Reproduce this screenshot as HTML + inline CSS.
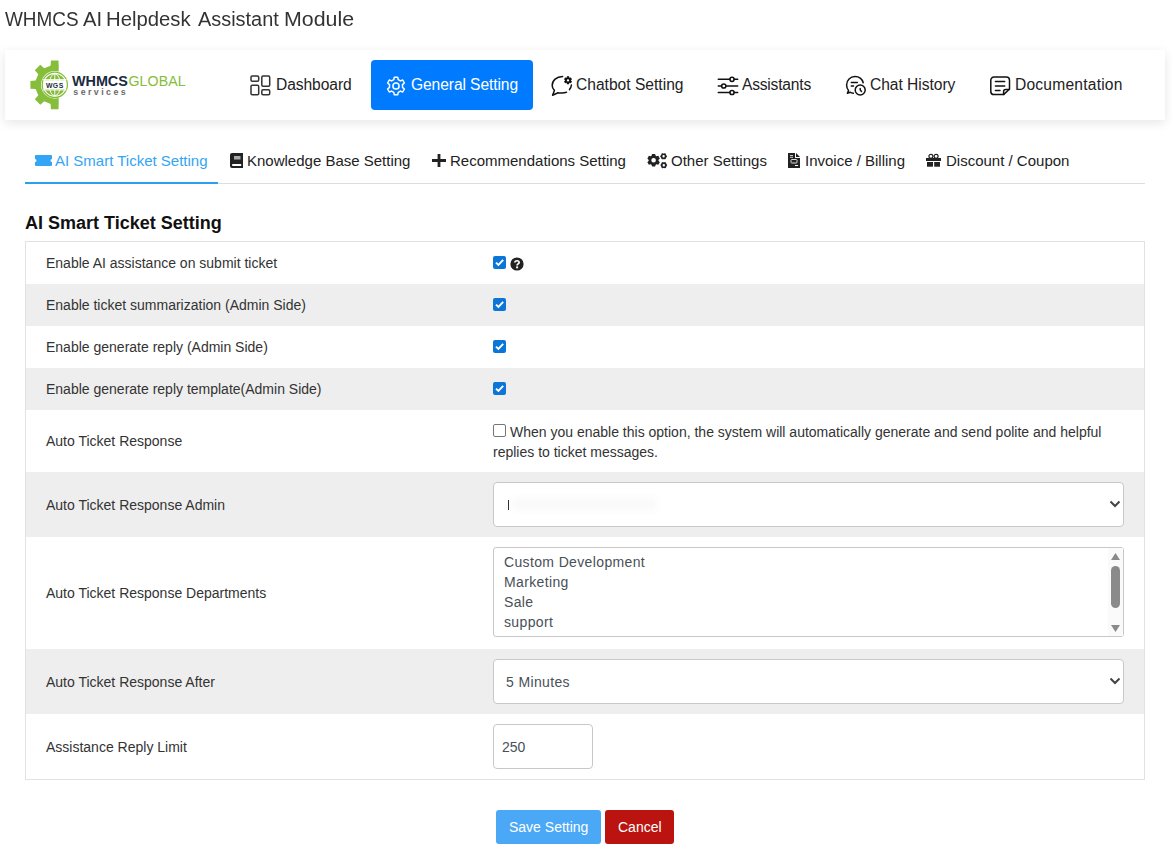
<!DOCTYPE html>
<html><head><meta charset="utf-8">
<style>
*{box-sizing:border-box;margin:0;padding:0}
html,body{width:1173px;height:861px;overflow:hidden;background:#fff}
body{position:relative;font-family:"Liberation Sans",sans-serif;color:#333}
.abs{position:absolute}
.t{position:absolute;white-space:nowrap;line-height:1}
.tw{top:9px;font-size:20px;color:#333;transform-origin:0 0}
#hdr{left:5px;top:50px;width:1160px;height:70px;background:#fff;box-shadow:0 3px 10px rgba(0,0,0,.10)}
.nav{font-size:15.6px;color:#222}
#gs{left:371px;top:60px;width:162px;height:50px;background:#007bff;border-radius:4px}
.tab{font-size:15px;color:#222}
#tabline{left:25px;top:183px;width:1120px;height:1px;background:#ddd}
#tabact{left:25px;top:182px;width:193px;height:2px;background:#2a9ef0}
#h3{left:25px;top:214px;font-size:18px;font-weight:bold;color:#111}
#tbl{left:25px;top:241px;width:1120px;height:539px;border:1px solid #dfe3e7}
.row{position:absolute;left:1px;width:1118px}
.g{background:#eeeeee}
.lbl{font-size:14px;color:#333}
.cb{position:absolute;width:13px;height:13px;border-radius:2px;background:#0b75d8}
.cb svg{position:absolute;left:0;top:0}
.cbu{position:absolute;width:13px;height:13px;border-radius:2px;border:1px solid #767676;background:#fff}
.sel{position:absolute;border:1px solid #c8c8c8;border-radius:4px;background:#fff}
.ff{font-size:14px;color:#495057;letter-spacing:0.36px}
.btn{position:absolute;border-radius:3px}
</style></head>
<body>
<div class="t tw" style="left:5.3px;transform:scaleX(0.946)">WHMCS</div>
<div class="t tw" style="left:83.2px;transform:scaleX(1.010)">AI</div>
<div class="t tw" style="left:106.3px;transform:scaleX(1.015)">Helpdesk</div>
<div class="t tw" style="left:197.6px;transform:scaleX(0.995)">Assistant</div>
<div class="t tw" style="left:283.9px;transform:scaleX(1.068)">Module</div>


<div id="hdr" class="abs"></div>

<!-- logo -->
<svg class="abs" style="left:0;top:0" width="200" height="120" viewBox="0 0 200 120">
  <defs>
    <clipPath id="half"><rect x="0" y="0" width="58.7" height="120"/></clipPath>
  </defs>
  <g clip-path="url(#half)">
    <path fill="#86bd3a" d="M50.60 65.66 L50.90 60.41 L58.70 60.41 L59.00 65.66 L65.37 68.29 L69.29 64.80 L74.80 70.31 L71.31 74.23 L73.94 80.60 L79.19 80.90 L79.19 88.70 L73.94 89.00 L71.31 95.37 L74.80 99.29 L69.29 104.80 L65.37 101.31 L59.00 103.94 L58.70 109.19 L50.90 109.19 L50.60 103.94 L44.23 101.31 L40.31 104.80 L34.80 99.29 L38.29 95.37 L35.66 89.00 L30.41 88.70 L30.41 80.90 L35.66 80.60 L38.29 74.23 L34.80 70.31 L40.31 64.80 L44.23 68.29Z"/>
  </g>
  <circle cx="54.8" cy="84.8" r="13.8" fill="#fff"/>
  <circle cx="54.8" cy="84.8" r="12.6" fill="none" stroke="#86bd3a" stroke-width="1.3"/>
  <circle cx="54.8" cy="84.8" r="10.9" fill="#86bd3a"/>
  <g stroke="#fff" stroke-width="0.9" fill="none">
    <line x1="54.8" y1="73.5" x2="54.8" y2="96"/>
    <ellipse cx="54.8" cy="84.8" rx="5.6" ry="11"/>
    <line x1="43" y1="79.6" x2="66.6" y2="79.6"/>
    <line x1="43" y1="90" x2="66.6" y2="90"/>
  </g>
  <rect x="43.5" y="80.2" width="22.6" height="9.2" fill="#fff"/>
  <text x="54.8" y="87.6" text-anchor="middle" font-family="Liberation Sans" font-weight="bold" font-size="6.9" fill="#1c2b40" letter-spacing="0.45">WGS</text>
  <text x="72" y="85.7" font-family="Liberation Sans" font-weight="bold" font-size="14.4" fill="#1c2b40" letter-spacing="-0.05">WHMCS</text>
  <text x="128.4" y="85.7" font-family="Liberation Sans" font-size="14.2" fill="#86bd3a" letter-spacing="0.1">GLOBAL</text>
  <text x="73.3" y="94.7" font-family="Liberation Sans" font-weight="bold" font-size="8.8" fill="#6a6a6a" letter-spacing="2.45">services</text>
</svg>

<!-- nav -->
<div id="gs" class="abs"></div>
<svg class="abs" style="left:250px;top:75px" width="21" height="21" viewBox="0 0 21 21" fill="none" stroke="#333" stroke-width="1.5">
  <rect x="1" y="1" width="7.7" height="5.2" rx="1.2"/>
  <rect x="1" y="10.2" width="7.7" height="9.5" rx="1.2"/>
  <rect x="11.8" y="1" width="7.9" height="10.3" rx="1.2"/>
  <rect x="11.8" y="14.8" width="7.9" height="4.9" rx="1.2"/>
</svg>
<div class="t nav" style="left:276px;top:76.5px;letter-spacing:-0.07px">Dashboard</div>

<svg class="abs" style="left:386px;top:76px" width="20" height="20" viewBox="0 0 20 20" fill="none" stroke="#fff" stroke-width="1.5" stroke-linejoin="round">
  <path d="M8.3 1.2 L11.7 1.2 L12.2 3.6 L14.4 4.9 L16.7 4 L18.4 7 L16.5 8.6 L16.5 11.4 L18.4 13 L16.7 16 L14.4 15.1 L12.2 16.4 L11.7 18.8 L8.3 18.8 L7.8 16.4 L5.6 15.1 L3.3 16 L1.6 13 L3.5 11.4 L3.5 8.6 L1.6 7 L3.3 4 L5.6 4.9 L7.8 3.6Z"/>
  <circle cx="10" cy="10" r="3.1"/>
</svg>
<div class="t nav" style="left:411px;top:76.5px;color:#fff;letter-spacing:-0.09px">General Setting</div>

<svg class="abs" style="left:548px;top:72px" width="28" height="28" viewBox="0 0 28 28" fill="none" stroke="#111" stroke-width="1.5" stroke-linecap="round" stroke-linejoin="round">
  <path d="M14.6 4.4 C8.5 4.6 4.2 8.6 4.2 13.4 C4.2 15.3 5 17 6.4 18.4 L4.6 23.2 L10 20.7 C11.3 21.1 12.8 21.1 14 21 C15.8 20.9 17.3 20.6 18.5 20.3"/>
  <path d="M23.4 13 C23.2 14.8 22.6 16.3 21.5 17.6"/>
  <path fill="#111" stroke="none" d="M18.65 5.67 L19.00 4.37 L21.00 4.37 L21.35 5.67 L21.65 5.84 L22.94 5.50 L23.94 7.23 L23.00 8.18 L23.00 8.52 L23.94 9.47 L22.94 11.20 L21.65 10.86 L21.35 11.03 L21.00 12.33 L19.00 12.33 L18.65 11.03 L18.35 10.86 L17.06 11.20 L16.06 9.47 L17.00 8.52 L17.00 8.18 L16.06 7.23 L17.06 5.50 L18.35 5.84Z M20.00 7.15 A1.20 1.20 0 1 0 20.00 9.55 A1.20 1.20 0 1 0 20.00 7.15 Z" fill-rule="evenodd"/>
</svg>
<div class="t nav" style="left:576px;top:76.5px;letter-spacing:0px">Chatbot Setting</div>

<svg class="abs" style="left:714px;top:72px" width="28" height="28" viewBox="0 0 28 28" fill="none" stroke="#111" stroke-width="1.5" stroke-linecap="round">
  <path d="M4.3 7.3 H15.9 M20.1 7.3 H23.7"/>
  <circle cx="18" cy="7.3" r="2.1"/>
  <path d="M4.3 14 H7.6 M11.9 14 H23.7"/>
  <circle cx="9.75" cy="14" r="2.1"/>
  <path d="M4.3 20.5 H15.9 M20.1 20.5 H23.7"/>
  <circle cx="18" cy="20.5" r="2.1"/>
</svg>
<div class="t nav" style="left:742px;top:76.5px;letter-spacing:-0.21px">Assistants</div>

<svg class="abs" style="left:842px;top:72px" width="28" height="28" viewBox="0 0 28 28" fill="none" stroke="#111" stroke-width="1.5" stroke-linecap="round" stroke-linejoin="round">
  <path d="M21.2 10.8 C20.1 7 16.8 4.6 13 4.6 C8.3 4.6 4.6 8.3 4.6 13 C4.6 15 5.3 16.9 6.5 18.4 L5.4 21.3 L8 20.2 C9.2 20.9 10.3 21.2 11.4 21.3"/>
  <path d="M9.3 10.4 H15.3 M9.3 14 H11.5"/>
  <circle cx="18.2" cy="18" r="5"/>
  <path d="M18.2 16.6 V17.9 L19.5 19.5"/>
</svg>
<div class="t nav" style="left:870px;top:76.5px;letter-spacing:-0.04px">Chat History</div>

<svg class="abs" style="left:986px;top:72px" width="28" height="28" viewBox="0 0 28 28" fill="none" stroke="#111" stroke-width="1.5" stroke-linecap="round" stroke-linejoin="round">
  <path d="M17.6 22.6 H8 A3.2 3.2 0 0 1 4.8 19.4 V8.2 A3.2 3.2 0 0 1 8 5 H20.3 A3.2 3.2 0 0 1 23.5 8.2 V17 Z"/>
  <path d="M17.6 22.6 V19.5 A2 2 0 0 1 19.6 17.5 H23.4"/>
  <path d="M9.4 9.4 H18.7 M9.4 14 H18.7 M9.4 18.5 H14"/>
</svg>
<div class="t nav" style="left:1015px;top:76.5px;letter-spacing:0.21px">Documentation</div>

<!-- tabs -->
<div id="tabline" class="abs"></div>
<div id="tabact" class="abs"></div>

<svg class="abs" style="left:35px;top:155px" width="17" height="11" viewBox="0 0 17 11">
  <path fill="#33a5f5" d="M1 0 H16 A1 1 0 0 1 17 1 V4 A1.5 1.5 0 0 0 17 7 V10 A1 1 0 0 1 16 11 H1 A1 1 0 0 1 0 10 V7 A1.5 1.5 0 0 0 0 4 V1 A1 1 0 0 1 1 0Z"/>
</svg>
<div class="t tab" style="left:55px;top:153px;color:#33a5f5">AI Smart Ticket Setting</div>

<svg class="abs" style="left:230px;top:153px" width="13" height="15" viewBox="0 0 13 15">
  <path fill="#222" d="M2 0 H13 V15 H2 A2 2 0 0 1 0 13 V2 A2 2 0 0 1 2 0Z"/>
  <rect x="4" y="3" width="6.5" height="3.5" fill="#aaa"/>
  <rect x="2.2" y="11" width="9" height="2" fill="#fff"/>
</svg>
<div class="t tab" style="left:247px;top:153px">Knowledge Base Setting</div>

<svg class="abs" style="left:432px;top:154px" width="14" height="13" viewBox="0 0 14 13">
  <path fill="#222" d="M5.6 0 H8.4 V5.1 H14 V7.9 H8.4 V13 H5.6 V7.9 H0 V5.1 H5.6Z"/>
</svg>
<div class="t tab" style="left:450px;top:153px">Recommendations Setting</div>

<svg class="abs" style="left:647px;top:153px" width="21" height="16" viewBox="0 0 21 16">
  <path fill="#222" fill-rule="evenodd" d="M4.50 2.87 L5.10 0.98 L8.10 0.98 L8.70 2.87 L9.38 3.27 L11.33 2.84 L12.83 5.44 L11.48 6.91 L11.48 7.69 L12.83 9.16 L11.33 11.76 L9.38 11.33 L8.70 11.73 L8.10 13.62 L5.10 13.62 L4.50 11.73 L3.82 11.33 L1.87 11.76 L0.37 9.16 L1.72 7.69 L1.72 6.91 L0.37 5.44 L1.87 2.84 L3.82 3.27Z M6.60 5.00 A2.30 2.30 0 1 0 6.60 9.60 A2.30 2.30 0 1 0 6.60 5.00 Z"/>
  <circle cx="16.60" cy="3.30" r="2.05" fill="none" stroke="#222" stroke-width="1.7"/><path d="M17.75 1.31 L18.25 0.44 M18.90 3.30 L19.90 3.30 M17.75 5.29 L18.25 6.16 M15.45 5.29 L14.95 6.16 M14.30 3.30 L13.30 3.30 M15.45 1.31 L14.95 0.44 " stroke="#222" stroke-width="1.3"/>
  <circle cx="16.80" cy="12.20" r="2.05" fill="none" stroke="#222" stroke-width="1.7"/><path d="M17.95 10.21 L18.45 9.34 M19.10 12.20 L20.10 12.20 M17.95 14.19 L18.45 15.06 M15.65 14.19 L15.15 15.06 M14.50 12.20 L13.50 12.20 M15.65 10.21 L15.15 9.34 " stroke="#222" stroke-width="1.3"/>
</svg>
<div class="t tab" style="left:671px;top:153px">Other Settings</div>

<svg class="abs" style="left:788px;top:153px" width="12" height="15" viewBox="0 0 12 15">
  <path fill="#222" d="M0 0 H7 V5 H12 V15 H0Z"/>
  <path fill="#222" d="M8 0 L12 4 H8Z"/>
  <rect x="2" y="2" width="3" height="0.9" fill="#ddd"/>
  <rect x="2" y="3.8" width="3" height="0.9" fill="#ddd"/>
  <rect x="3" y="6.5" width="6" height="3.5" rx="0.8" fill="none" stroke="#ddd" stroke-width="1"/>
  <rect x="7" y="12" width="3" height="1" fill="#fff"/>
</svg>
<div class="t tab" style="left:805px;top:153px">Invoice / Billing</div>

<svg class="abs" style="left:926px;top:153px" width="15" height="14" viewBox="0 0 15 14">
  <circle cx="4.9" cy="3.3" r="2" fill="none" stroke="#222" stroke-width="1.2"/><circle cx="10.1" cy="3.3" r="2" fill="none" stroke="#222" stroke-width="1.2"/>
  <rect x="0" y="5" width="15" height="3" fill="#222"/>
  <rect x="1" y="9" width="6" height="4.7" fill="#222"/>
  <rect x="8.2" y="9" width="5.8" height="4.7" fill="#222"/>
</svg>
<div class="t tab" style="left:946px;top:153px">Discount / Coupon</div>

<div id="h3" class="t">AI Smart Ticket Setting</div>

<!-- table -->
<div id="tbl" class="abs"></div>
<div class="abs g" style="left:26px;top:284px;width:1118px;height:42px"></div>
<div class="abs g" style="left:26px;top:368px;width:1118px;height:42px"></div>
<div class="abs g" style="left:26px;top:472px;width:1118px;height:65px"></div>
<div class="abs g" style="left:26px;top:649px;width:1118px;height:65px"></div>

<div class="t lbl" style="left:46px;top:256px">Enable AI assistance on submit ticket</div>
<div class="t lbl" style="left:46px;top:298px">Enable ticket summarization (Admin Side)</div>
<div class="t lbl" style="left:46px;top:340px">Enable generate reply (Admin Side)</div>
<div class="t lbl" style="left:46px;top:382px">Enable generate reply template(Admin Side)</div>
<div class="t lbl" style="left:46px;top:434px">Auto Ticket Response</div>
<div class="t lbl" style="left:46px;top:498px">Auto Ticket Response Admin</div>
<div class="t lbl" style="left:46px;top:586px">Auto Ticket Response Departments</div>
<div class="t lbl" style="left:46px;top:675px">Auto Ticket Response After</div>
<div class="t lbl" style="left:46px;top:740px">Assistance Reply Limit</div>

<!-- checkboxes -->
<div class="cb" style="left:493px;top:256px"><svg width="13" height="13" viewBox="0 0 13 13"><path d="M3 6.6 L5.4 9 L10.2 3.8" fill="none" stroke="#fff" stroke-width="1.9"/></svg></div>
<svg class="abs" style="left:510px;top:257px" width="14" height="14" viewBox="0 0 14 14">
  <circle cx="7" cy="7" r="6.6" fill="#222"/>
  <path d="M4.9 5.4 C4.9 3.2 9.1 3.2 9.1 5.4 C9.1 6.9 7.1 6.9 7.1 8.4" fill="none" stroke="#fff" stroke-width="1.7"/>
  <rect x="6.1" y="9.4" width="2" height="1.9" fill="#fff"/>
</svg>
<div class="cb" style="left:493px;top:298px"><svg width="13" height="13" viewBox="0 0 13 13"><path d="M3 6.6 L5.4 9 L10.2 3.8" fill="none" stroke="#fff" stroke-width="1.9"/></svg></div>
<div class="cb" style="left:493px;top:340px"><svg width="13" height="13" viewBox="0 0 13 13"><path d="M3 6.6 L5.4 9 L10.2 3.8" fill="none" stroke="#fff" stroke-width="1.9"/></svg></div>
<div class="cb" style="left:493px;top:382px"><svg width="13" height="13" viewBox="0 0 13 13"><path d="M3 6.6 L5.4 9 L10.2 3.8" fill="none" stroke="#fff" stroke-width="1.9"/></svg></div>

<div class="cbu" style="left:493px;top:424px"></div>
<div class="t lbl" style="left:510px;top:425px">When you enable this option, the system will automatically generate and send polite and helpful</div>
<div class="t lbl" style="left:493px;top:445px">replies to ticket messages.</div>

<!-- select admin -->
<div class="sel" style="left:493px;top:482px;width:631px;height:45px"></div>
<div class="abs" style="left:508px;top:500px;width:1px;height:10px;background:#333"></div>
<div class="abs" style="left:512px;top:497px;width:145px;height:14px;background:rgba(0,0,0,.02);filter:blur(3px)"></div>
<svg class="abs" style="left:1109px;top:500px" width="12" height="8" viewBox="0 0 12 8"><path d="M1.5 1.5 L6 6 L10.5 1.5" fill="none" stroke="#444" stroke-width="2"/></svg>

<!-- listbox -->
<div class="sel" style="left:493px;top:547px;width:631px;height:90px;border-radius:3px"></div>
<div class="t ff" style="left:504px;top:555px">Custom Development</div>
<div class="t ff" style="left:504px;top:575px">Marketing</div>
<div class="t ff" style="left:504px;top:595px">Sale</div>
<div class="t ff" style="left:504px;top:615px">support</div>
<div class="abs" style="left:1108px;top:548px;width:15px;height:88px;background:#fafafa"></div>
<svg class="abs" style="left:1108px;top:548px" width="15" height="88" viewBox="0 0 15 88">
  <path d="M3 12 L7.5 5 L12 12Z" fill="#8a8a8a"/>
  <rect x="3" y="18" width="9" height="42" rx="4.5" fill="#8a8a8a"/>
  <path d="M3 77 L12 77 L7.5 84Z" fill="#8a8a8a"/>
</svg>

<!-- select after -->
<div class="sel" style="left:493px;top:659px;width:631px;height:45px"></div>
<div class="t ff" style="left:506px;top:675px">5 Minutes</div>
<svg class="abs" style="left:1109px;top:677px" width="12" height="8" viewBox="0 0 12 8"><path d="M1.5 1.5 L6 6 L10.5 1.5" fill="none" stroke="#444" stroke-width="2"/></svg>

<!-- input -->
<div class="sel" style="left:493px;top:724px;width:100px;height:45px"></div>
<div class="t ff" style="left:502px;top:740px;letter-spacing:0">250</div>

<!-- buttons -->
<div class="btn" style="left:496px;top:810px;width:105px;height:34px;background:#4aa8f6"></div>
<div class="t" style="left:509px;top:820px;font-size:14px;color:#fff">Save Setting</div>
<div class="btn" style="left:605px;top:810px;width:69px;height:34px;background:#bb1410"></div>
<div class="t" style="left:618px;top:820px;font-size:14px;color:#fff">Cancel</div>
</body></html>
